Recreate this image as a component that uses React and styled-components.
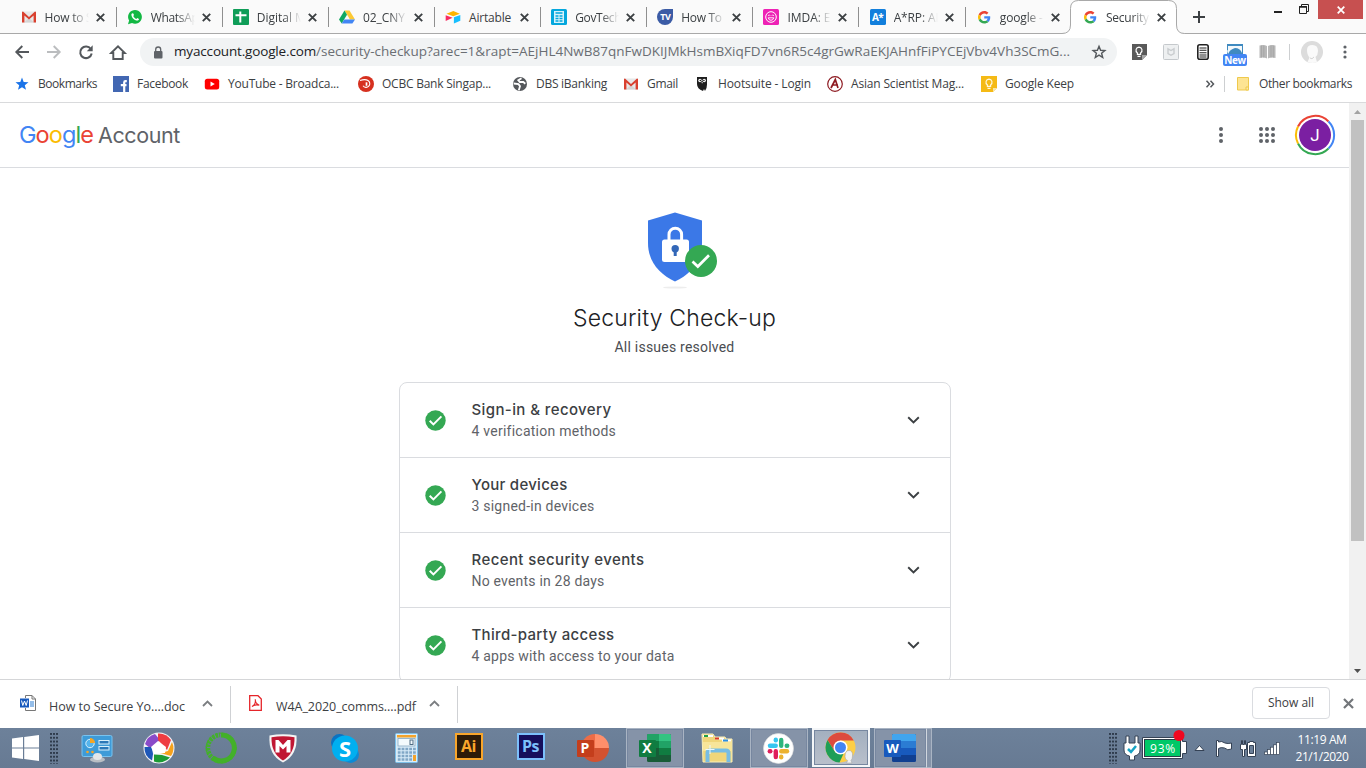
import React, { useLayoutEffect, useRef } from 'react';
import styled, { createGlobalStyle, css } from 'styled-components';

const ui = '"Open Sans", "Noto Sans", sans-serif';
const product = 'Inter, "Open Sans", sans-serif';

const Global = createGlobalStyle`
  * { box-sizing: border-box; }
  html, body { margin: 0; padding: 0; overflow: hidden; background: #fff; }
  svg { display: block; flex: none; overflow: visible; }
`;

/* ---------- text that tracks itself to a set width ---------- */
const Run = styled.span`
  display: inline-block;
  white-space: pre;
  flex: none;
  font: ${(p) => p.$weight || 400} ${(p) => p.$size || 12}px/1.3 ${(p) => p.$font || ui};
  color: ${(p) => p.$color || '#3c4043'};
`;

function Text({ w, children, ...rest }) {
  const ref = useRef(null);
  useLayoutEffect(() => {
    const el = ref.current;
    el.style.letterSpacing = '0px';
    if (!w) return;
    const n = el.textContent.length;
    el.style.letterSpacing = `${(w - el.getBoundingClientRect().width) / n}px`;
  }, [w]);
  return <Run ref={ref} {...rest}>{children}</Run>;
}

const Window = styled.div`
  width: 1366px;
  height: 768px;
  display: flex;
  flex-direction: column;
  overflow: hidden;
  background: #fff;
`;

/* ---------- tab strip ---------- */
const TabStrip = styled.div`
  height: 34px;
  flex: none;
  display: flex;
  align-items: flex-start;
  padding-left: 10px;
  background: #fafafa;
  box-shadow: inset 0 -1px #a9a9a9;
`;
const Tab = styled.div`
  width: 106.15px;
  height: 34px;
  flex: none;
  display: flex;
  align-items: center;
  padding-left: 10.5px;
  position: relative;
  ${(p) => !p.$active && !p.$last && css`
    &::after { content: ''; width: 1px; height: 20px; background: #8f8f8f; margin-left: 11px; }
  `}
`;
const ActiveShape = styled.svg`
  position: absolute;
  left: -9px;
  top: 0;
`;
const TabIcon = styled.div`
  width: 16px;
  height: 16px;
  flex: none;
  position: relative;
  display: grid;
  place-items: center;
`;
const TabTitle = styled.div`
  width: 51px;
  margin-left: 8px;
  flex: none;
  position: relative;
  mask-image: linear-gradient(90deg, #000 26px, transparent 44px);
  ${(p) => p.$full && css`mask-image: none;`}
`;
const Cross = ({ size = 9, color = '#3c4043', sw = 1.9 }) => (
  <svg width={size} height={size} viewBox="0 0 9 9" style={{ position: 'relative' }}>
    <path d="M.8.8 8.2 8.2M8.2.8.8 8.2" stroke={color} strokeWidth={sw} fill="none" />
  </svg>
);
const NewTab = styled.div`
  width: 34px;
  height: 34px;
  margin-left: 4px;
  display: grid;
  place-items: center;
`;
const WindowControls = styled.div`
  margin-left: auto;
  margin-right: 3px;
  display: flex;
`;
const CloseWindow = styled.div`
  width: 45px;
  height: 19px;
  margin-left: 9px;
  background: #c75050;
  display: grid;
  place-items: center;
`;

/* ---------- toolbar ---------- */
const Toolbar = styled.div`
  height: 36px;
  flex: none;
  display: flex;
  align-items: center;
  padding: 0 5px 0 6px;
`;
const Slot = styled.div`
  width: 32px;
  height: 36px;
  flex: none;
  display: grid;
  place-items: center;
`;
const Omnibox = styled.div`
  width: 977px;
  height: 28px;
  margin: 0 6px;
  padding: 0 11px 0 13px;
  border-radius: 14px;
  background: #f1f3f4;
  display: flex;
  align-items: center;
  justify-content: space-between;
`;
const Address = styled.div`
  display: flex;
  align-items: center;
  gap: 11px;
  height: 28px;
`;
const Url = styled.div`
  display: flex;
`;
const Divider = styled.div`
  width: 1px;
  height: 16px;
  margin: 0 11px 0 6px;
  background: #cdcfd1;
  flex: none;
`;
const NewBadge = styled.span`
  position: absolute;
  left: -4px;
  top: 10px;
  width: 24px;
  height: 12px;
  border-radius: 2px;
  background: #4285f4;
  color: #fff;
  font: 700 10px/13px ${ui};
  text-align: center;
  letter-spacing: -.3px;
`;
const Badged = styled.div`
  width: 16px;
  height: 16px;
  position: relative;
`;

/* ---------- bookmarks ---------- */
const Bookmarks = styled.div`
  height: 33px;
  flex: none;
  display: flex;
  align-items: center;
  padding: 0 14px 4px;
  border-bottom: 1px solid #d9dadc;
`;
const Bookmark = styled.div`
  width: ${(p) => p.$w}px;
  flex: none;
  display: flex;
  align-items: center;
  gap: 8px;
`;
const Overflow = styled.div`
  margin-left: auto;
  display: flex;
  align-items: center;
`;

/* ---------- page ---------- */
const Viewport = styled.div`
  height: 576px;
  flex: none;
  display: flex;
  overflow: hidden;
`;
const Page = styled.div`
  width: 1349px;
  display: flex;
  flex-direction: column;
  align-items: center;
`;
const Header = styled.header`
  width: 100%;
  height: 65px;
  flex: none;
  display: flex;
  align-items: center;
  justify-content: space-between;
  padding: 0 14px 0 19px;
  border-bottom: 1px solid #dadce0;
`;
const Brand = styled.div`
  display: flex;
  align-items: baseline;
  gap: 5px;
`;
const HeaderTools = styled.div`
  display: flex;
  align-items: center;
`;
const Avatar = styled.div`
  position: relative;
  width: 40px;
  height: 40px;
  margin-left: 20px;
  display: grid;
  place-items: center;
`;
const Initial = styled.span`
  position: absolute;
  inset: 0;
  text-align: center;
  font: 400 17px/41px Roboto, sans-serif;
  color: #fff;
`;
const Hero = styled.section`
  display: flex;
  flex-direction: column;
  align-items: center;
  padding-top: 44px;
`;
const Title = styled.h1`
  margin: 12px 0 0;
  height: 34px;
  display: flex;
  align-items: center;
`;
const Subtitle = styled.div`
  height: 22px;
  display: flex;
  align-items: center;
`;
const Card = styled.section`
  width: 552px;
  margin-top: 24px;
  flex: none;
  border: 1px solid #dadce0;
  border-radius: 8px;
`;
const Row = styled.div`
  height: 75px;
  display: flex;
  align-items: center;
  padding: 0 30px 0 25px;
  & + & { border-top: 1px solid #dadce0; }
  &:first-child { height: 74px; }
`;
const RowText = styled.div`
  display: flex;
  flex-direction: column;
  align-items: flex-start;
  margin-left: 26px;
  margin-right: auto;
  gap: 2px;
`;

const Scrollbar = styled.div`
  width: 17px;
  background: #f1f1f1;
  display: flex;
  flex-direction: column;
  align-items: center;
  justify-content: space-between;
`;
const ScrollArrow = styled.div`
  height: 17px;
  display: grid;
  place-items: center;
`;
const Thumb = styled.div`
  width: 13px;
  height: 421px;
  margin-bottom: auto;
  background: #c1c1c1;
`;

/* ---------- downloads ---------- */
const Downloads = styled.div`
  height: 49px;
  flex: none;
  display: flex;
  align-items: center;
  border-top: 1px solid #d5d6d8;
  padding-right: 12px;
`;
const Download = styled.div`
  width: ${(p) => p.$w}px;
  height: 37px;
  display: flex;
  align-items: center;
  padding-left: ${(p) => p.$pad}px;
  padding-bottom: 2px;
  border-right: 1px solid #cfd1d4;
`;
const FileName = styled.div`
  margin: 6px 17px 0 13px;
`;
const ShowAll = styled.div`
  width: 78px;
  height: 32px;
  margin-left: auto;
  margin-right: 13px;
  margin-bottom: 2px;
  border: 1px solid #dadce0;
  border-radius: 4px;
  display: grid;
  place-items: center;
`;

/* ---------- taskbar ---------- */
const Taskbar = styled.div`
  height: 40px;
  flex: none;
  display: flex;
  align-items: center;
  background: linear-gradient(#6d819a, #677a93);
`;
const Start = styled.div`
  width: 50px;
  display: grid;
  place-items: center;
`;
const Grip = styled.div`
  width: 9px;
  height: 31px;
  flex: none;
  background: radial-gradient(circle at 1px 1px, #2f3c4d 0.9px, transparent 1.2px) 0 0 / 3px 3.8px;
`;
const Apps = styled.div`
  display: flex;
  gap: 4px;
  margin-left: 8.5px;
`;
const AppButton = styled.div`
  width: 58px;
  height: 40px;
  display: grid;
  place-items: center;
  border: 1px solid transparent;
  ${(p) => p.$open && css`background: #8593a8; border-color: #a9b4c3; box-shadow: inset 0 0 0 1px #7787a0;`}
  ${(p) => p.$focus && css`background: linear-gradient(#a3afbf, #b9c0cb); border: 2px solid #f4f6f8; height: 39px;`}
  ${(p) => p.$stack && css`width: 53px; border-right-color: #d0d6de;`}
`;
const StackEdge = styled.div`
  width: 5px;
  height: 40px;
  margin-left: -4px;
  background: #8593a8;
  border: 1px solid #a9b4c3;
  border-left: 0;
`;
const Tray = styled.div`
  margin-left: auto;
  display: flex;
  align-items: center;
  height: 40px;
`;
const Battery = styled.div`
  position: relative;
  width: 46px;
  height: 27px;
  margin-left: 1px;
  margin-bottom: 2px;
`;
const Charge = styled.span`
  position: absolute;
  left: 6px;
  top: 5px;
  width: 30px;
  text-align: center;
`;
const Clock = styled.div`
  width: 58px;
  margin: 0 15px 0 12px;
  display: flex;
  flex-direction: column;
  align-items: center;
  gap: 1px;
`;

/* ---------- favicons ---------- */
const Gmail = () => (
  <svg width="16" height="16" viewBox="0 0 16 16">
    <rect x="1" y="2.5" width="14" height="11" fill="#e8e8e8" />
    <path d="M3 13.5 8 9l5 4.5Z" fill="#d5d5d5" />
    <path d="M1 13.5V3.2Q1 2.5 2 2.5L8 8l6-5.5q1 0 1 .7v10.3h-2.4V6.6L8 10.6 3.400 6.600v6.9Z" fill="#d9402f" />
  </svg>
);
const WhatsApp = () => (
  <svg width="16" height="16" viewBox="0 0 16 16">
    <path d="m1 15.200 1.100-3.700A6.900 6.900 0 1 1 5 14.100Z" fill="#12b843" />
    <path d="M5.500 4.200c-.7 0-1.200.8-1.100 1.700.3 2.700 3 5.300 5.700 5.600 1 .1 2-.7 1.900-1.500L10.300 9l-1 .9C8 9.400 6.800 8.300 6.300 6.900l.7-.9-.7-1.600Z" fill="#fff" />
  </svg>
);
const Sheets = () => (
  <svg width="16" height="16" viewBox="0 0 16 16">
    <rect width="16" height="16" rx="1" fill="#0f9d58" />
    <path d="M2.500 6.300h11M7.300 2.500v11" stroke="#fff" strokeWidth="2" />
  </svg>
);
const Drive = () => (
  <svg width="16" height="16" viewBox="0 0 16 16">
    <path d="M5.500 1.500h5L16 10.500h-5Z" fill="#fcc934" />
    <path d="M5.500 1.500 8 5.800 2.700 14.500 0 10.500Z" fill="#11a861" />
    <path d="M5.300 10.500H16l-2.600 4H2.700Z" fill="#4285f4" />
  </svg>
);
const Airtable = () => (
  <svg width="16" height="16" viewBox="0 0 16 16">
    <path d="M1.500 4.700 8.300 2l6.500 2.700-6.500 2.500Z" fill="#fcb400" />
    <path d="M8.900 8.300 15.300 6v5.800l-6.400 2.600Z" fill="#18bfff" />
    <path d="M.7 6.200 7.600 8.800.7 12Z" fill="#f82b60" />
  </svg>
);
const Gov = () => (
  <svg width="16" height="16" viewBox="0 0 16 16">
    <rect width="16" height="16" rx="1.500" fill="#04a7dd" />
    <rect x="3" y="2" width="10" height="12" fill="#d7f2fb" />
    <path d="M4.500 4h7M4.500 7h3M8.500 7h3M4.500 9.500h3M8.500 9.500h3M4.500 12h3M8.500 12h3" stroke="#04a7dd" strokeWidth="1.300" />
  </svg>
);
const MiniText = styled.span`
  position: absolute;
  inset: 0;
  text-align: center;
  color: #fff;
  font: 700 ${(p) => p.$size}px/${(p) => p.$lh || 16}px ${ui};
  letter-spacing: -.5px;
`;
const Tv = () => (
  <>
    <svg width="16" height="16" viewBox="0 0 16 16">
      <path d="M8 0h8v8a8 8 0 1 1-8-8Z" fill="#3b5ba5" />
    </svg>
    <MiniText $size={9}>TV</MiniText>
  </>
);
const Imda = () => (
  <svg width="16" height="16" viewBox="0 0 16 16">
    <rect width="16" height="16" rx="1.500" fill="#ee22b5" />
    <circle cx="8" cy="8" r="5.300" fill="none" stroke="#fff" strokeWidth="1" />
    <path d="M5.200 8.800h5.600Q10 11.300 8 11.300T5.200 8.800M5.200 6.800l1-1 1 1M8.800 6.800l1-1 1 1" fill="none" stroke="#fff" strokeWidth=".9" />
  </svg>
);
const AStar = () => (
  <>
    <svg width="16" height="16" viewBox="0 0 16 16"><rect width="16" height="16" rx="1.500" fill="#127fdc" /></svg>
    <MiniText $size={10}>A*</MiniText>
  </>
);
const Google = () => (
  <svg width="12.500" height="12.500" viewBox="0 0 48 48">
    <path fill="#EA4335" d="M24 9.500c3.540 0 6.710 1.220 9.210 3.600l6.850-6.850C35.900 2.380 30.470 0 24 0 14.620 0 6.510 5.380 2.560 13.220l7.980 6.190C12.430 13.720 17.740 9.500 24 9.500z" />
    <path fill="#4285F4" d="M46.980 24.550c0-1.570-.15-3.090-.38-4.550H24v9.020h12.940c-.58 2.960-2.260 5.480-4.780 7.180l7.730 6c4.510-4.180 7.090-10.360 7.090-17.650z" />
    <path fill="#FBBC05" d="M10.530 28.590A14.500 14.500 0 0 1 9.770 24c0-1.600.27-3.140.76-4.590l-7.980-6.190A23.900 23.900 0 0 0 0 24c0 3.880.92 7.540 2.560 10.780z" />
    <path fill="#34A853" d="M24 48c6.480 0 11.930-2.130 15.890-5.810l-7.730-6c-2.150 1.450-4.920 2.300-8.160 2.300-6.260 0-11.570-4.220-13.470-9.910l-7.980 6.190C6.510 42.620 14.620 48 24 48z" />
  </svg>
);

const tabs = [
  { icon: <Gmail />, title: 'How to S', w: 48 },
  { icon: <WhatsApp />, title: 'WhatsAp', w: 48 },
  { icon: <Sheets />, title: 'Digital M', w: 49 },
  { icon: <Drive />, title: '02_CNY', w: 42 },
  { icon: <Airtable />, title: 'Airtable', w: 42, full: true },
  { icon: <Gov />, title: 'GovTech', w: 46 },
  { icon: <Tv />, title: 'How To ', w: 43 },
  { icon: <Imda />, title: 'IMDA: E', w: 43 },
  { icon: <AStar />, title: 'A*RP: AI', w: 45 },
  { icon: <Google />, title: 'google - ', w: 46 },
  { icon: <Google />, title: 'Security', w: 43, active: true },
];

/* ---------- bookmark icons ---------- */
const Star = () => (
  <svg width="16" height="16" viewBox="0 0 16 16">
    <path d="m8 1.500 1.700 4.400 4.800.3-3.700 3 1.200 4.600L8 11.200l-4 2.600 1.200-4.600-3.700-3 4.800-.3Z" fill="#1a73e8" />
  </svg>
);
const Facebook = () => (
  <svg width="16" height="16" viewBox="0 0 16 16">
    <rect width="16" height="16" fill="#4267b2" />
    <path d="M13.800 5.200h-1.300q-1.300 0-1.300 1.300V16M7.800 9.200h5.700" stroke="#fff" strokeWidth="2.200" fill="none" />
  </svg>
);
const YouTube = () => (
  <svg width="16" height="16" viewBox="0 0 16 16">
    <rect x=".8" y="2.700" width="14.400" height="10.800" rx="2.500" fill="#f00" />
    <path d="m6.500 5.600 4.300 2.500-4.300 2.500Z" fill="#fff" />
  </svg>
);
const Ocbc = () => (
  <svg width="16" height="16" viewBox="0 0 16 16">
    <circle cx="8" cy="8" r="8" fill="#d6301f" />
    <path d="M2 4.500Q7 2.700 10 4.500a3.700 3.700 0 1 1-5 5.200" stroke="#fff" strokeWidth="1.100" fill="none" />
    <path d="M8.500 6.300v3.500" stroke="#fff" strokeWidth="1.700" />
  </svg>
);
const Globe = () => (
  <svg width="16" height="16" viewBox="0 0 16 16">
    <circle cx="8" cy="8" r="7" fill="#55585c" />
    <path d="M9.500 2.300 6.300 4.300l1.500 1.700h3.500l2 1.700M1.700 7.500l4.800.7 1.500 2-1.200 4" stroke="#fff" strokeWidth="1.800" fill="none" />
  </svg>
);
const Owl = () => (
  <svg width="16" height="16" viewBox="0 0 16 16">
    <path d="M3 1h10v7.500q0 4-2 6.500l-1-2-1 2Q3 13 3 8Z" fill="#1f1f1f" />
    <circle cx="6" cy="4.500" r="1.700" fill="#fff" /><circle cx="10.200" cy="4.500" r="1.700" fill="#fff" />
    <circle cx="6.300" cy="4.500" r=".7" /><circle cx="9.900" cy="4.500" r=".7" />
    <path d="M7.500 6h1.300L8.100 7.700Z" fill="#fff" />
  </svg>
);
const Asian = () => (
  <svg width="16" height="16" viewBox="0 0 16 16">
    <circle cx="8" cy="8" r="7.300" fill="#fff" stroke="#8e1b22" strokeWidth="1.200" />
    <path d="M4 12 8.300 3.500 11 12M5 9h6" stroke="#8e1b22" strokeWidth="1.700" fill="none" />
  </svg>
);
const Bulb = ({ color }) => (
  <path d="M8 3.200a3.100 3.100 0 0 0-1.600 5.700v1.500h3.200V8.900A3.100 3.100 0 0 0 8 3.200ZM6.500 12.400h3" fill="none" stroke={color} strokeWidth="1.200" />
);
const Keep = () => (
  <svg width="16" height="16" viewBox="0 0 16 16">
    <path d="M0 0h16v12l-4 4H0Z" fill="#f5ba15" /><path d="M16 12l-4 4v-4Z" fill="#f7e6a8" />
    <Bulb color="#fff7dc" />
  </svg>
);

const marks = [
  { icon: <Star />, name: 'Bookmarks', w: 59, slot: 99 },
  { icon: <Facebook />, name: 'Facebook', w: 51, slot: 91 },
  { icon: <YouTube />, name: 'YouTube - Broadca...', w: 111, slot: 154 },
  { icon: <Ocbc />, name: 'OCBC Bank Singap...', w: 109, slot: 154 },
  { icon: <Globe />, name: 'DBS iBanking', w: 71, slot: 111 },
  { icon: <Gmail />, name: 'Gmail', w: 31, slot: 71 },
  { icon: <Owl />, name: 'Hootsuite - Login', w: 93, slot: 133 },
  { icon: <Asian />, name: 'Asian Scientist Mag...', w: 113, slot: 154 },
  { icon: <Keep />, name: 'Google Keep', w: 69, slot: 100 },
];

/* ---------- page drawings ---------- */
const Shield = () => (
  <svg width="72" height="78" viewBox="0 0 72 78" style={{ marginLeft: 19 }}>
    <ellipse cx="27" cy="75.500" rx="12" ry="1" fill="#ededed" />
    <path d="M27 .5 54 8.500V31C54 50 42 62.500 27 69.500 12 62.500 0 50 0 31V8.500Z" fill="#3b78e7" />
    <path d="M21 28v-5.500a6.300 6.300 0 0 1 12.600 0V28" fill="none" stroke="#fff" strokeWidth="3" />
    <rect x="14" y="27.500" width="27" height="22.500" rx="2.500" fill="#fff" />
    <circle cx="27.200" cy="36.800" r="3.700" fill="#3367b8" /><path d="M25.700 38h3v6h-3Z" fill="#3367b8" />
    <circle cx="53" cy="49" r="16" fill="#34a853" />
    <path d="m44.500 49.500 5.300 5L61 43.200" fill="none" stroke="#fff" strokeWidth="2.700" />
  </svg>
);
const CheckCircle = () => (
  <svg width="21" height="21" viewBox="0 0 21 21">
    <circle cx="10.500" cy="10.500" r="10.200" fill="#34a853" />
    <path d="m4.700 10.700 3.700 3.700 8-8" fill="none" stroke="#fff" strokeWidth="2" />
  </svg>
);
const Chevron = () => (
  <svg width="13" height="8" viewBox="0 0 13 8">
    <path d="m1.200 1.200 5.300 5.200 5.300-5.200" fill="none" stroke="#3c4043" strokeWidth="1.900" />
  </svg>
);
const Dots = ({ h = 16, r = 2, gap = 6, color = '#5f6368' }) => (
  <svg width="4" height={h} viewBox={`-2 ${-h / 2} 4 ${h}`}>
    {[-1, 0, 1].map((i) => <circle key={i} cy={i * gap} r={r} fill={color} />)}
  </svg>
);
const Grid = () => (
  <svg width="16" height="16" viewBox="-8 -8 16 16" style={{ marginLeft: 38 }}>
    {[-1, 0, 1].flatMap((x) => [-1, 0, 1].map((y) => (
      <circle key={`${x}${y}`} cx={x * 6} cy={y * 6} r="2" fill="#5f6368" />
    )))}
  </svg>
);
const Caret = () => (
  <svg width="11" height="7" viewBox="0 0 11 7">
    <path d="m1 6 4.500-4.500L10 6" fill="none" stroke="#7b7e81" strokeWidth="1.800" />
  </svg>
);

const rows = [
  ['Sign-in & recovery', 140, '4 verification methods', 144],
  ['Your devices', 96, '3 signed-in devices', 123],
  ['Recent security events', 173, 'No events in 28 days', 133],
  ['Third-party access', 143, '4 apps with access to your data', 203],
];

/* ---------- taskbar icons ---------- */
const Tile = styled.div`
  width: 28px;
  height: 27px;
  margin-bottom: 3px;
  border: 2px solid ${(p) => p.$line};
  background: ${(p) => p.$bg};
  color: ${(p) => p.$line};
  font: 700 16px/22px ${ui};
  text-align: center;
  letter-spacing: -.5px;
`;
const Lettered = styled.div`
  position: relative;
  width: 32px;
  height: 28px;
  margin-bottom: 1px;
`;
const Letter = styled.span`
  position: absolute;
  left: ${(p) => p.$x || 0}px;
  top: ${(p) => p.$y || 0}px;
  width: ${(p) => p.$w || 17}px;
  text-align: center;
  color: #fff;
  font: 700 ${(p) => p.$size || 14}px/16px ${ui};
`;
const Windows = () => (
  <svg width="27" height="26" viewBox="0 0 27 26">
    <path d="M0 3.600 11 2v10.400H0ZM12.200 1.900 27 0v12.400H12.200ZM0 13.600h11V24L0 22.400ZM12.200 13.600H27V26l-14.800-1.900Z" fill="#fff" />
  </svg>
);
const ControlPanel = () => (
  <svg width="32" height="30" viewBox="0 0 32 30">
    <rect x="1" y="2.500" width="30" height="21" rx="1.500" fill="#3e9bd8" stroke="#79c3ef" />
    <circle cx="9" cy="10.500" r="4.200" fill="#55b4ec" stroke="#d8f0fc" /><path d="M9 10V5a5 5 0 0 1 5 5Z" fill="#f6a623" />
    <rect x="18" y="7.500" width="10" height="3.500" fill="#2a78b8" stroke="#d8f0fc" /><rect x="18" y="13.500" width="10" height="3.500" fill="#2a78b8" stroke="#d8f0fc" />
    <circle cx="6.500" cy="19" r="1.300" fill="#f6a623" /><circle cx="11.500" cy="19" r="1.300" fill="#f6a623" />
    <ellipse cx="16.500" cy="26.500" rx="7.500" ry="3" fill="#b9bec4" /><ellipse cx="16.500" cy="23.500" rx="4.500" ry="3.500" fill="#e4e6e8" />
  </svg>
);
const Picasa = () => (
  <svg width="32" height="32" viewBox="-16 -16 32 32">
    <circle r="15.500" fill="#f3f3f6" />
    <path d="M-14-4A14.500 14.500 0 0 1-4-14L1-8-8 1Z" fill="#8a4bc9" />
    <path d="M-1-14.500A14.500 14.500 0 0 1 12-8L8 2-1-8Z" fill="#ee3d42" />
    <path d="M13-6A14.500 14.500 0 0 1 12 8L1 5 9 3Z" fill="#f6a21c" />
    <path d="M11 9.500A14.500 14.500 0 0 1-5 13.500V6.500L3 7Z" fill="#1c9b34" />
    <path d="M-7 12.500A14.500 14.500 0 0 1-14.500-1L-7-1-6 6Z" fill="#1f58b8" />
    <path d="M-8-1-1-7 7-1 6 5-5 6Z" fill="#fff" />
  </svg>
);
const Anaconda = () => (
  <svg width="32" height="32" viewBox="-16 -16 32 32">
    <path d="M0-13A13 13 0 1 1-8 10" fill="none" stroke="#43b02a" strokeWidth="5" />
    <path d="M-7 11A13 13 0 0 1-1-13" fill="none" stroke="#43b02a" strokeWidth="4.500" strokeDasharray="2.500 1" />
    <circle r="14.700" fill="none" stroke="#43b02a" strokeWidth="1.500" strokeDasharray="2 1.500" />
  </svg>
);
const McAfee = () => (
  <svg width="28" height="29" viewBox="0 0 28 29">
    <path d="M.5 1.500Q14-1 27.500 1.500 29 21 14 28.500-1 21 .5 1.500Z" fill="#f5f5f5" />
    <path d="M2.500 3.300Q14 1 25.500 3.300 26 19.500 14 26.500 2 19.500 2.500 3.300Z" fill="#c01733" />
    <path d="M6.500 18.500V6h3l4.500 5L18.500 6h3v12.500h-4V12L14 15.500 10.500 12v6.500Z" fill="#fff" />
  </svg>
);
const Skype = () => (
  <Lettered>
    <svg width="32" height="29" viewBox="0 0 32 29">
      <circle cx="10.500" cy="8.500" r="8.500" fill="#0a73c2" /><circle cx="21.500" cy="20.500" r="8.500" fill="#0b8ad6" /><circle cx="16" cy="14.500" r="13" fill="#00aff0" />
    </svg>
    <Letter $x={8} $y={6} $size={22}>S</Letter>
  </Lettered>
);
const Calculator = () => (
  <svg width="23" height="30" viewBox="0 0 23 30">
    <rect x=".5" y=".5" width="22" height="29" rx="1" fill="#d9ecf8" stroke="#7cc0ea" />
    <rect x="2" y="2" width="19" height="2.500" fill="#f3a32b" /><rect x="3" y="5.500" width="17" height="7.500" fill="#f3fafd" stroke="#86a8c0" strokeWidth=".8" />
    <rect x="15" y="7" width="3" height="4.500" fill="none" stroke="#4f6c84" />
    {[16, 19.500, 23, 26.500].map((y) => <path key={y} d={`M2.800 ${y}h18`} stroke="#80a7c6" strokeWidth="2.300" strokeDasharray="2.800 1" />)}
    <rect x="18" y="22" width="3" height="6" fill="#f3a32b" />
  </svg>
);
const PowerPoint = () => (
  <Lettered>
    <svg width="32" height="28" viewBox="0 0 32 28">
      <path d="M18 0A14 14 0 0 0 4 14h14Z" fill="#ed6c47" /><path d="M18 0a14 14 0 0 1 14 14H18Z" fill="#ff8f6b" /><path d="M4 14a14 14 0 0 0 28 0Z" fill="#d35230" />
      <rect y="6" width="17" height="17" rx="1" fill="#c43e1c" />
    </svg>
    <Letter $y={6}>P</Letter>
  </Lettered>
);
const Excel = () => (
  <Lettered>
    <svg width="32" height="28" viewBox="0 0 32 28">
      <rect x="8" width="24" height="28" rx="1.500" fill="#185c37" /><path d="M9 0h11v7H8V1Z" fill="#21a366" /><path d="M20 0h11l1 1v6H20Z" fill="#33c481" /><path d="M8 7h12v7H8Z" fill="#107c41" /><path d="M20 7h12v7H20Z" fill="#21a366" /><path d="M20 14h12v7H20Z" fill="#107c41" />
      <rect y="6" width="17" height="17" rx="1" fill="#107c41" />
    </svg>
    <Letter $y={6}>X</Letter>
  </Lettered>
);
const Word = () => (
  <Lettered>
    <svg width="32" height="28" viewBox="0 0 32 28">
      <rect x="8" width="24" height="28" rx="1.500" fill="#103f91" /><path d="M9 0h22l1 1v6H8V1Z" fill="#41a5ee" /><path d="M8 7h24v7H8Z" fill="#2b7cd3" /><path d="M8 14h24v7H8Z" fill="#185abd" />
      <rect y="6" width="17" height="17" rx="1" fill="#185abd" />
    </svg>
    <Letter $y={6} $size={13}>W</Letter>
  </Lettered>
);
const Explorer = () => (
  <svg width="32" height="30" viewBox="0 0 32 30">
    <path d="M1 1h11l2 3h10l1 2h6v23H2Z" fill="#f0d67a" stroke="#fbf0b8" />
    <path d="M2 3h10M14 5.500h9M21 7.500h9" stroke="#fff" strokeWidth="2" /><path d="M3 3h4" stroke="#22a045" strokeWidth="2" /><path d="M14 5.500h4" stroke="#d83a25" strokeWidth="2" /><path d="M22 7.500h5" stroke="#2c8fe0" strokeWidth="2" />
    <path d="M2 9h29v9H2Z" fill="#f7e59a" />
    <path d="M6.500 29V20q0-2.500 2.500-2.500h16Q27.500 17.500 27.500 20v9" fill="none" stroke="#77bde4" strokeWidth="4" />
    <path d="M9 12v9M4.500 16.500h9" stroke="#eaf8ff" strokeWidth="1" />
  </svg>
);
const Slack = () => (
  <svg width="31" height="31" viewBox="-15.500 -15.500 31 31">
    <circle r="15" fill="#fff" stroke="#ddd" strokeWidth=".6" />
    {[['#36c5f0', 0], ['#2eb67d', 90], ['#ecb22e', 180], ['#e01e5a', 270]].map(([c, a]) => (
      <g key={a} transform={`rotate(${a})`} stroke={c} strokeWidth="4.400" strokeLinecap="round">
        <path d="M-8.500-2.700h5.700" /><path d="M-2.700-8.700v.5" />
      </g>
    ))}
  </svg>
);
const Chrome = () => (
  <svg width="31" height="31" viewBox="-15.500 -15.500 31 31">
    <circle r="15" fill="#fdce46" />
    <path d="M-6.100 3.500-13-7.500A15 15 0 0 1 13.300-7H0Z" fill="#dd4b3e" />
    <path d="M-6.100 3.500Q-3 7 3 6.300L-1 15A15 15 0 0 1-13-7.500Z" fill="#1e9e57" />
    <circle r="7" fill="#fff" /><circle r="5.500" fill="#4285f4" />
    <path d="M4.500 9q0-6 4-6T12 8.500q0 3-1.500 4.500l1 2.500H6L7.200 13Q4.500 12.500 4.500 9Z" fill="#f1f1f1" stroke="#a8a8a8" strokeWidth=".6" />
  </svg>
);

const apps = [
  { icon: <ControlPanel /> }, { icon: <Picasa /> }, { icon: <Anaconda /> }, { icon: <McAfee /> },
  { icon: <Skype /> }, { icon: <Calculator /> },
  { icon: <Tile $line="#f9a62b" $bg="#2e1c08">Ai</Tile> },
  { icon: <Tile $line="#7cc0fb" $bg="#150f5c">Ps</Tile> },
  { icon: <PowerPoint /> }, { icon: <Excel />, open: true }, { icon: <Explorer /> },
  { icon: <Slack />, open: true }, { icon: <Chrome />, open: true, focus: true },
  { icon: <Word />, open: true, stack: true },
];

const outline = { stroke: '#354255', strokeWidth: 1, fill: '#fff' };

export default function App() {
  return (
    <Window>
      <Global />
      <TabStrip>
        {tabs.map((t, i) => (
          <Tab key={t.title} $active={t.active} $last={i === 9}>
            {t.active && (
              <ActiveShape width="122" height="34" viewBox="0 0 122 34">
                <path d="M0 33.500Q8.500 33.500 8.500 25V8.500Q8.500.5 16.500.5h90q8 0 8 8V25q0 8.500 8 8.500V34.500H0Z" fill="#fff" />
                <path d="M0 33.500Q8.500 33.500 8.500 25V8.500Q8.500.5 16.500.5h90q8 0 8 8V25q0 8.500 8 8.500" fill="none" stroke="#a9a9a9" />
              </ActiveShape>
            )}
            <TabIcon>{t.icon}</TabIcon>
            <TabTitle $full={t.full}><Text w={t.w}>{t.title}</Text></TabTitle>
            <Cross />
          </Tab>
        ))}
        <NewTab>
          <svg width="12" height="12" viewBox="0 0 12 12"><path d="M6 0v12M0 6h12" stroke="#3c4043" strokeWidth="2" /></svg>
        </NewTab>
        <WindowControls>
          <svg width="36" height="20" viewBox="0 0 36 20">
            <path d="M1 12h8" stroke="#222" strokeWidth="2" />
            <path d="M26.500 6.500h7v7h-7ZM28.500 6V4.500h7v7H34" fill="none" stroke="#222" />
            <path d="M26 7h8" stroke="#222" strokeWidth="1.500" />
          </svg>
          <CloseWindow><Cross size={8} color="#fff" sw={2} /></CloseWindow>
        </WindowControls>
      </TabStrip>

      <Toolbar>
        <Slot><svg width="14" height="14" viewBox="0 0 14 14"><path d="M14 7H1.500M7.300 1 1.300 7l6 6" fill="none" stroke="#54585c" strokeWidth="1.900" /></svg></Slot>
        <Slot><svg width="14" height="14" viewBox="0 0 14 14"><path d="M0 7h12.500M6.700 1l6 6-6 6" fill="none" stroke="#bbbdbf" strokeWidth="1.900" /></svg></Slot>
        <Slot><svg width="14" height="14" viewBox="0 0 14 14"><path d="M11.800 4A5.800 5.800 0 1 0 12.700 8.500" fill="none" stroke="#54585c" strokeWidth="2" /><path d="M13.700.3v6H7.800Z" fill="#54585c" /></svg></Slot>
        <Slot><svg width="16" height="15" viewBox="0 0 16 15"><path d="M1.200 8 8 1.300 14.800 8H12.700v6H3.300V8Z" fill="none" stroke="#54585c" strokeWidth="1.900" /></svg></Slot>
        <Omnibox>
          <Address>
            <svg width="10" height="13" viewBox="0 0 10 13"><rect x="1" y="5" width="8.500" height="7.500" rx="1" fill="#5f6368" /><path d="M2.700 5V3.500a2.500 2.500 0 0 1 5 0V5" fill="none" stroke="#5f6368" strokeWidth="1.300" /></svg>
            <Url>
              <Text $size={13.500} w={142} $color="#202124">myaccount.google.com</Text>
              <Text $size={13.500} w={754} $color="#6a6e73">/security-checkup?arec=1&amp;rapt=AEjHL4NwB87qnFwDKIJMkHsmBXiqFD7vn6R5c4grGwRaEKJAHnfFiPYCEjVbv4Vh3SCmG...</Text>
            </Url>
          </Address>
          <svg width="14" height="14" viewBox="0 0 14 14"><path d="m7 1.300 1.600 4 4.300.3-3.300 2.700 1.100 4.200L7 10.100l-3.700 2.400 1.100-4.200-3.300-2.700 4.300-.3Z" fill="none" stroke="#54585c" strokeWidth="1.400" /></svg>
        </Omnibox>
        <Slot><svg width="16" height="16" viewBox="0 0 16 16"><path d="M1 0h15v11l-5 5H1Z" fill="#595959" /><path d="M16 11l-5 5v-5Z" fill="#a6a6a6" /><Bulb color="#fff" /></svg></Slot>
        <Slot><svg width="16" height="16" viewBox="0 0 16 16"><rect x=".5" y=".5" width="15" height="15" rx="1" fill="#eef0f1" stroke="#c5c9cc" /><path d="M5 4.800 8 6.500l3-1.700v4.700L8 11.300 5 9.500Z" fill="none" stroke="#c9cccf" strokeWidth="1.400" /></svg></Slot>
        <Slot><svg width="12" height="16" viewBox="0 0 12 16"><rect x=".8" y=".8" width="10.400" height="14.400" rx="2" fill="#fff" stroke="#222" strokeWidth="1.600" /><path d="M2.500 4h7M2.500 6.300h7M2.500 8.700h7M2.500 11h7M2.500 13h7" stroke="#222" strokeWidth="1.100" /></svg></Slot>
        <Slot>
          <Badged>
            <svg width="16" height="16" viewBox="0 0 16 16"><rect y="0" width="16" height="12" fill="#3f8ac0" /><path d="M1 2h14v7Q13 4 8 4L1 7Z" fill="#f3f8fb" /><path d="M0 6.500 5 5Q2 7 1 10Z" fill="#f3f8fb" /></svg>
            <NewBadge>New</NewBadge>
          </Badged>
        </Slot>
        <Slot><svg width="17" height="16" viewBox="0 0 17 16"><path d="M.5 1.500Q5 .5 8 2v12.500Q5 13 .5 14ZM9 2q3-1.500 7.500-.5V14Q12 13 9 14.500Z" fill="#b8b8b8" /><path d="M2.500 1.500v12M4.800 1.500v12M12 1.500v12M14.300 1.500v12" stroke="#a2a2a2" strokeWidth=".8" /></svg></Slot>
        <Divider />
        <svg width="22" height="22" viewBox="0 0 22 22">
          <circle cx="11" cy="11" r="11" fill="#dcdcdc" />
          <path d="M6 9q0-5 5.500-5t5.500 6q0 4-2.500 6l1.500 5q-4.500 2-9.500 0l2-4.500Q6 14 6 9Z" fill="#fafafa" />
          <path d="M9 17q2 2 4-1" fill="none" stroke="#d4d4d4" />
        </svg>
        <Slot style={{ marginLeft: 6 }}><Dots h={14} r={1.600} gap={5} /></Slot>
      </Toolbar>

      <Bookmarks>
        {marks.map((m) => (
          <Bookmark key={m.name} $w={m.slot}>{m.icon}<Text w={m.w}>{m.name}</Text></Bookmark>
        ))}
        <Overflow>
          <svg width="8" height="8" viewBox="0 0 8 8"><path d="m.5.8 3 3.200-3 3.200M4.500.8l3 3.200-3 3.200" fill="none" stroke="#54585c" strokeWidth="1.500" /></svg>
          <Divider style={{ margin: '0 12px 0 10px' }} />
          <svg width="12" height="14" viewBox="0 0 12 14"><path d="M.5.500h11v12.500H.5Z" fill="#fde493" stroke="#efc94c" /><path d="M9 10h2.500v3H9Z" fill="#fbe9a9" stroke="#efc94c" /></svg>
          <Text w={93} style={{ marginLeft: 10 }}>Other bookmarks</Text>
        </Overflow>
      </Bookmarks>

      <Viewport>
        <Page>
          <Header>
            <Brand>
              <Text $font={product} $size={23.500} w={74}>
                {[['G', '#4285f4'], ['o', '#ea4335'], ['o', '#fbbc04'], ['g', '#4285f4'], ['l', '#34a853'], ['e', '#ea4335']].map(([c, k], i) => (
                  <span key={i} style={{ color: k }}>{c}</span>
                ))}
              </Text>
              <Text $font={product} $size={21.500} w={82} $color="#5f6368">Account</Text>
            </Brand>
            <HeaderTools>
              <div style={{ marginRight: -2 }}><Dots /></div>
              <Grid />
              <Avatar>
                <svg width="40" height="40" viewBox="-20 -20 40 40">
                  <g fill="none" strokeWidth="2">
                    <path d="M-17-8.500A19 19 0 0 1 13.500-13.500" stroke="#ea4335" /><path d="M13.500-13.500A19 19 0 0 1 13.500 13.500" stroke="#4285f4" />
                    <path d="M13.500 13.500A19 19 0 0 1-17 8.500" stroke="#34a853" /><path d="M-17 8.500A19 19 0 0 1-17-8.500" stroke="#fbbc04" />
                  </g>
                  <circle r="16" fill="#7b1fa2" />
                </svg>
                <Initial>J</Initial>
              </Avatar>
            </HeaderTools>
          </Header>
          <Hero>
            <Shield />
            <Title><Text $font={product} $size={23} $weight={300} w={203} $color="#202124">Security Check-up</Text></Title>
            <Subtitle><Text $font="Roboto" $size={14} w={120} $color="#4a4d51">All issues resolved</Text></Subtitle>
          </Hero>
          <Card>
            {rows.map(([a, aw, b, bw]) => (
              <Row key={a}>
                <CheckCircle />
                <RowText>
                  <Text $font={product} $size={15} $weight={500} w={aw}>{a}</Text>
                  <Text $font="Roboto" $size={14} w={bw} $color="#5f6368">{b}</Text>
                </RowText>
                <Chevron />
              </Row>
            ))}
          </Card>
        </Page>
        <Scrollbar>
          <ScrollArrow><svg width="7" height="4" viewBox="0 0 7 4"><path d="M0 4 3.500 0 7 4Z" fill="#a3a3a3" /></svg></ScrollArrow>
          <Thumb />
          <ScrollArrow><svg width="7" height="4" viewBox="0 0 7 4"><path d="M0 0h7L3.500 4Z" fill="#505050" /></svg></ScrollArrow>
        </Scrollbar>
      </Viewport>

      <Downloads>
        <Download $w={231} $pad={20}>
          <svg width="16" height="16" viewBox="0 0 16 16"><path d="M5.500 3V.5H12L15.500 4v11.500h-10V13M12 .5V4h3.500" fill="#fff" stroke="#777" /><path d="M10 7h4M10 9h4M10 11h4" stroke="#2b7cd3" /><rect y="3.500" width="9" height="9" fill="#185abd" /><path d="m1.500 5.500 1.300 5 1.700-4.500 1.700 4.500 1.300-5" fill="none" stroke="#fff" /></svg>
          <FileName><Text $size={12.500} w={136}>How to Secure Yo....doc</Text></FileName>
          <Caret />
        </Download>
        <Download $w={227} $pad={18}>
          <svg width="13" height="16" viewBox="0 0 13 16"><path d="M.7.7H9L12.300 4v11.300H.7Z" fill="#fff" stroke="#e5252a" strokeWidth="1.300" /><path d="M3 11.500q4-2 3.300-7.200Q6 8.500 10.300 10.300 6 9 3 11.500Z" fill="none" stroke="#e5252a" strokeWidth="1.100" /></svg>
          <FileName style={{ marginLeft: 14, marginRight: 13 }}><Text $size={12.500} w={140}>W4A_2020_comms....pdf</Text></FileName>
          <Caret />
        </Download>
        <ShowAll><Text w={46}>Show all</Text></ShowAll>
        <div style={{ marginBottom: 2 }}><Cross size={11} color="#73767a" sw={1.800} /></div>
      </Downloads>

      <Taskbar>
        <Start><Windows /></Start>
        <Grip />
        <Apps>
          {apps.map((a, i) => (
            <AppButton key={i} $open={a.open} $focus={a.focus} $stack={a.stack}>{a.icon}</AppButton>
          ))}
          <StackEdge />
        </Apps>
        <Tray>
          <Grip />
          <svg width="18" height="26" viewBox="0 0 18 26" style={{ marginLeft: 5 }}><path d="M3 1h3v7h6V1h3v7h2v7q0 5-5.500 6v4h-5v-4Q1 20 1 15V8h2Z" {...outline} /><path d="m5 14 3 3 5-6" fill="none" stroke="#16a3c4" strokeWidth="2.500" /></svg>
          <Battery>
            <svg width="46" height="27" viewBox="0 0 46 27">
              <path d="M.5 3.500h40v4h4v12h-4v5H.5Z" fill="#fff" stroke="#354255" />
              <rect x="2.500" y="5.500" width="36" height="17" fill="#00c867" stroke="#2a3d48" />
              <circle cx="37" cy="1.500" r="5.500" fill="#f00820" />
            </svg>
            <Charge><Text $size={12} w={26} $color="#fff">93%</Text></Charge>
          </Battery>
          <svg width="9" height="6" viewBox="0 0 9 6" style={{ marginLeft: 7 }}><path d="M0 5.500 4.500.5 9 5.500Z" {...outline} /></svg>
          <svg width="17" height="17" viewBox="0 0 17 17" style={{ marginLeft: 12 }}><path d="M.5.500h2v1.500q3-1.500 6.500 1 3 1 6.500 0v6q-4 2-7-1Q5 7 2.500 8.500v8h-2Z" {...outline} /></svg>
          <svg width="16" height="17" viewBox="0 0 16 17" style={{ marginLeft: 7 }}><path d="M1.500.5v4h-1v5h2v7h2v-7h2v-5h-1v-4h-1v4h-2v-4Z" {...outline} /><path d="M7.500 2.500h2v-1h4v1h2v14h-8Z" {...outline} /><path d="M9.500 5.500h4v8h-4Z" fill="#6b7f98" stroke="#354255" /></svg>
          <svg width="17" height="14" viewBox="0 0 17 14" style={{ marginLeft: 8 }}>
            {[0, 1, 2, 3, 4].map((i) => <rect key={i} x={i * 3 + 0.5} y={11 - i * 2.400} width="3" height={2.500 + i * 2.400} {...outline} strokeWidth={0.700} />)}
          </svg>
          <Clock>
            <Text $color="#fff" w={49}>11:19 AM</Text>
            <Text $color="#fff" w={53}>21/1/2020</Text>
          </Clock>
        </Tray>
      </Taskbar>
    </Window>
  );
}
